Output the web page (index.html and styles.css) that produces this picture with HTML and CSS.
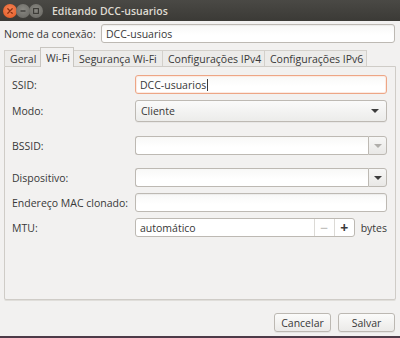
FILE: index.html
```html
<!DOCTYPE html>
<html lang="pt">
<head>
<meta charset="utf-8">
<link rel="stylesheet" href="styles.css">
</head>
<body>
<div class="window">
  <div class="titlebar">
    <div class="controls">
      <span class="wbtn close"><svg width="14" height="14" viewBox="0 0 14 14"><path d="M4.8 4.8l4.4 4.4M9.2 4.8l-4.4 4.4" stroke="#8a3010" stroke-width="1.3" stroke-linecap="round"/></svg></span>
      <span class="wbtn min"><svg width="14" height="14" viewBox="0 0 14 14"><path d="M4.5 7h5" stroke="#3a3935" stroke-width="1.3"/></svg></span>
      <span class="wbtn max"><svg width="14" height="14" viewBox="0 0 14 14"><rect x="4.6" y="4.6" width="4.8" height="4.8" fill="none" stroke="#3a3935" stroke-width="1.1"/></svg></span>
    </div>
    <div class="title">Editando DCC-usuarios</div>
  </div>
  <div class="body">
    <div class="name-row">
      <span class="name-label">Nome da conexão:</span>
      <div class="entry name-entry">DCC-usuarios</div>
    </div>
    <div class="tabs">
      <div class="tab t1">Geral</div>
      <div class="tab active t2">Wi-Fi</div>
      <div class="tab t3">Segurança Wi-Fi</div>
      <div class="tab t4">Configurações IPv4</div>
      <div class="tab last t5">Configurações IPv6</div>
    </div>
    <div class="panel">
      <div class="form">
        <div class="label">SSID:</div>
        <div class="entry focus">DCC-usuarios<span class="caret"></span></div>

        <div class="label combo-label">Modo:</div>
        <div class="combo"><span>Cliente</span><span class="arrow"></span></div>

        <div class="label">BSSID:</div>
        <div class="combo-entry"><div class="ce-text"></div><div class="ce-btn"><span class="arrow dim"></span></div></div>

        <div class="label">Dispositivo:</div>
        <div class="combo-entry"><div class="ce-text"></div><div class="ce-btn"><span class="arrow"></span></div></div>

        <div class="label">Endereço MAC clonado:</div>
        <div class="entry"></div>

        <div class="label">MTU:</div>
        <div class="mtu-row">
          <div class="spin"><div class="spin-text">automático</div><div class="spin-btn minus">−</div><div class="spin-btn plus">+</div></div>
          <span class="unit">bytes</span>
        </div>
      </div>
    </div>
    <div class="buttons">
      <button class="btn">Cancelar</button>
      <button class="btn">Salvar</button>
    </div>
  </div>
  <div class="bottom-strip"></div>
</div>
</body>
</html>
```
FILE: styles.css
```css
* { box-sizing: border-box; }
html, body { margin: 0; padding: 0; }
body {
  width: 400px;
  height: 338px;
  overflow: hidden;
  font-family: "Open Sans", "Noto Sans", sans-serif;
  font-size: 10.5px;
  color: #383838;
  background: #f2f1f0;
  white-space: nowrap;
}
.window { display: flex; flex-direction: column; height: 338px; }
.titlebar {
  height: 21px;
  flex: none;
  display: flex;
  align-items: center;
  background: linear-gradient(#4a4945, #3b3a36);
  color: #dfdbd2;
}
.controls { display: flex; padding-left: 3px; width: 52px; }
.wbtn { width: 14px; height: 14px; border-radius: 50%; display: flex; margin-right: -1px; }
.close { background: radial-gradient(circle at 50% 40%, #f5865a, #e1561e); }
.min, .max { background: radial-gradient(circle at 50% 40%, #8a8983, #65645f); }
.title { font-weight: 600; font-size: 10.5px; }
.body { flex: 1; display: flex; flex-direction: column; padding: 3px 4px 0 4px; }
.name-row { display: flex; align-items: center; height: 19px; }
.name-label { width: 97px; }
.entry {
  height: 19px;
  border: 1px solid #bdb9b3;
  border-radius: 3px;
  background: linear-gradient(#f8f8f7, #ffffff 60%);
  padding: 0 4px;
  display: flex; align-items: center;
  box-shadow: inset 0 1px 1px rgba(0,0,0,0.05);
}
.name-entry { flex: 1; margin-right: 1px; }
.tabs { display: flex; margin-top: 4px; height: 19px; align-items: flex-end; }
.tab {
  height: 16px;
  padding: 0 0 0 5px;
  border: 1px solid #d3d0cb;
  border-bottom: none;
  border-right: none;
  display: flex; align-items: center;
  background: #ecebe9;
}
.t1 { width: 36px; }
.t2 { width: 34px; }
.t3 { width: 88px; }
.t4 { width: 102px; }
.t5 { width: 103px; }
.tab.last { border-right: 1px solid #d3d0cb; }
.tab.active {
  height: 20px;
  background: #f2f1f0;
  border: 1px solid #c8c5c0;
  border-bottom: none;
  padding-left: 5px;
  margin-bottom: -1px;
  position: relative; z-index: 1;
}
.tab.active + .tab { border-left: none; }
.panel {
  height: 234px;
  border: 1px solid #cfccc7;
  border-radius: 0 0 2px 2px;
  padding: 8px 8px 0 7px;
  box-shadow: 0 1px 0 #e0deda;
}
.form {
  display: grid;
  grid-template-columns: 123px 252px;
  grid-template-rows: 19px 22px 27px 26px 19px 19px;
  row-gap: 6px;
  align-items: end;
}
.label { display: flex; align-items: center; height: 19px; }
.label.combo-label { height: 22px; }
.entry.focus { border-color: #eda686; box-shadow: inset 0 0 0 1px #fcebe3; }
.caret { display: inline-block; width: 1px; height: 12px; background: #3c3c3c; margin-left: 1px; }
.combo {
  height: 22px;
  border: 1px solid #bdb9b3;
  border-radius: 3px;
  background: linear-gradient(#fafafa, #ececea);
  padding: 0 7px 0 5px;
  display: flex; align-items: center; justify-content: space-between;
  box-shadow: 0 1px 0 rgba(0,0,0,0.04);
}
.arrow {
  width: 0; height: 0;
  border-left: 4px solid transparent;
  border-right: 4px solid transparent;
  border-top: 4px solid #3c3c3c;
}
.arrow.dim { border-top-color: #b0aeaa; }
.combo-entry { height: 19px; display: flex; }
.ce-text {
  flex: 1;
  border: 1px solid #bdb9b3;
  border-right: none;
  border-radius: 3px 0 0 3px;
  background: linear-gradient(#f8f8f7, #fff 60%);
}
.ce-btn {
  width: 19px;
  border: 1px solid #bdb9b3;
  border-radius: 0 3px 3px 0;
  background: linear-gradient(#f7f7f6, #e9e8e6);
  display: flex; align-items: center; justify-content: center;
}
.mtu-row { display: flex; align-items: center; height: 19px; }
.spin {
  width: 222px; height: 19px;
  display: flex;
  border: 1px solid #bdb9b3;
  border-radius: 3px;
  background: #fff;
}
.spin-text { flex: 1; padding: 0 4px; display: flex; align-items: center; }
.spin-btn {
  width: 20px;
  border-left: 1px solid #dcdad6;
  display: flex; align-items: center; justify-content: center;
  font-size: 14px;
}
.spin-btn.minus { color: #b5b3af; }
.spin-btn.plus { color: #3c3c3c; font-weight: bold; }
.unit { margin-left: 6px; }
.buttons {
  display: flex; justify-content: flex-end; gap: 7px;
  margin-top: 13px;
  padding-right: 1px;
}
.btn {
  font: inherit;
  color: #383838;
  width: 57px; height: 19px;
  border: 1px solid #bcb8b2;
  border-radius: 3px;
  background: linear-gradient(#fbfbfa, #ebeae8);
  padding: 0;
  box-shadow: 0 1px 0 rgba(0,0,0,0.05);
}
.bottom-strip { height: 2px; background: #4d3b48; margin-top: auto; }
```
